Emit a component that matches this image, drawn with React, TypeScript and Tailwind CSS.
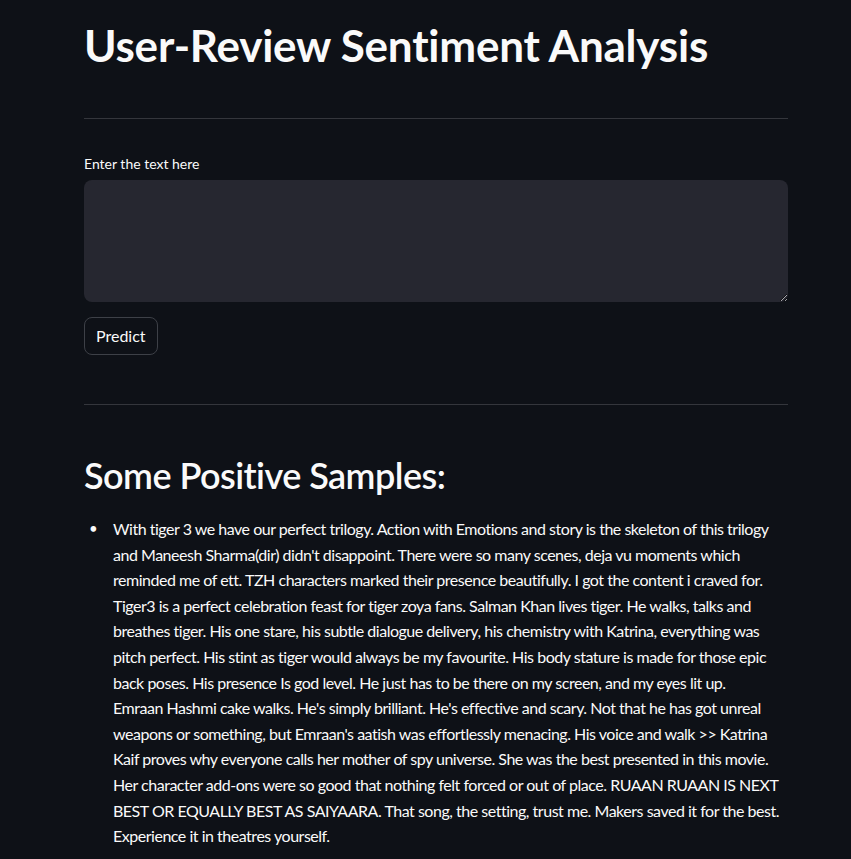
import React, { useState } from "react"

const sampleLines = [
    "With tiger 3 we have our perfect trilogy. Action with Emotions and story is the skeleton of this trilogy",
    "and Maneesh Sharma(dir) didn't disappoint. There were so many scenes, deja vu moments which",
    "reminded me of ett. TZH characters marked their presence beautifully. I got the content i craved for.",
    "Tiger3 is a perfect celebration feast for tiger zoya fans. Salman Khan lives tiger. He walks, talks and",
    "breathes tiger. His one stare, his subtle dialogue delivery, his chemistry with Katrina, everything was",
    "pitch perfect. His stint as tiger would always be my favourite. His body stature is made for those epic",
    "back poses. His presence Is god level. He just has to be there on my screen, and my eyes lit up.",
    "Emraan Hashmi cake walks. He's simply brilliant. He's effective and scary. Not that he has got unreal",
    "weapons or something, but Emraan's aatish was effortlessly menacing. His voice and walk >> Katrina",
    "Kaif proves why everyone calls her mother of spy universe. She was the best presented in this movie.",
    "Her character add-ons were so good that nothing felt forced or out of place. RUAAN RUAAN IS NEXT",
    "BEST OR EQUALLY BEST AS SAIYAARA. That song, the setting, trust me. Makers saved it for the best.",
    "Experience it in theatres yourself.",
]

export default function App() {
    const [text, setText] = useState("")

    return (
        <div className="min-h-[859px] bg-[#0e1117] text-[#fafafa] font-['Lato','Noto_Sans',sans-serif]">
            <div className="w-[704px] ml-[84px] pt-[18px]">
                <h1 className="text-[44px] font-bold leading-[54px] tracking-[-0.005em]">User-Review Sentiment Analysis</h1>

                <hr className="mt-[46px] border-t border-[#34363c]" />

                <label htmlFor="review" className="block mt-[36px] text-[14px] leading-[18px]">Enter the text here</label>
                <textarea
                    id="review"
                    value={text}
                    onChange={e => setText(e.target.value)}
                    className="block mt-[7px] w-full h-[122px] bg-[#262730] rounded-lg px-3 py-2 text-[16px] outline-none"
                />

                <button className="mt-[15px] h-[38px] px-[11px] rounded-lg border border-[#3d4047] bg-[#0e1117] text-[16px]">Predict</button>

                <hr className="mt-[49px] border-t border-[#34363c]" />

                <h2 className="mt-[48px] text-[36px] font-semibold leading-[44px] tracking-[-0.015em]">Some Positive Samples:</h2>

                <ul className="mt-[19px] text-[16px] leading-[25.6px] tracking-[-0.03em]">
                    <li className="flex">
                        <span className="w-[29px] shrink-0 pl-[5px] text-[15px]">•</span>
                        <div>
                            {sampleLines.map((line, i) => (
                                <span key={i} className="block whitespace-nowrap">{line}</span>
                            ))}
                        </div>
                    </li>
                </ul>
            </div>
        </div>
    )
}
